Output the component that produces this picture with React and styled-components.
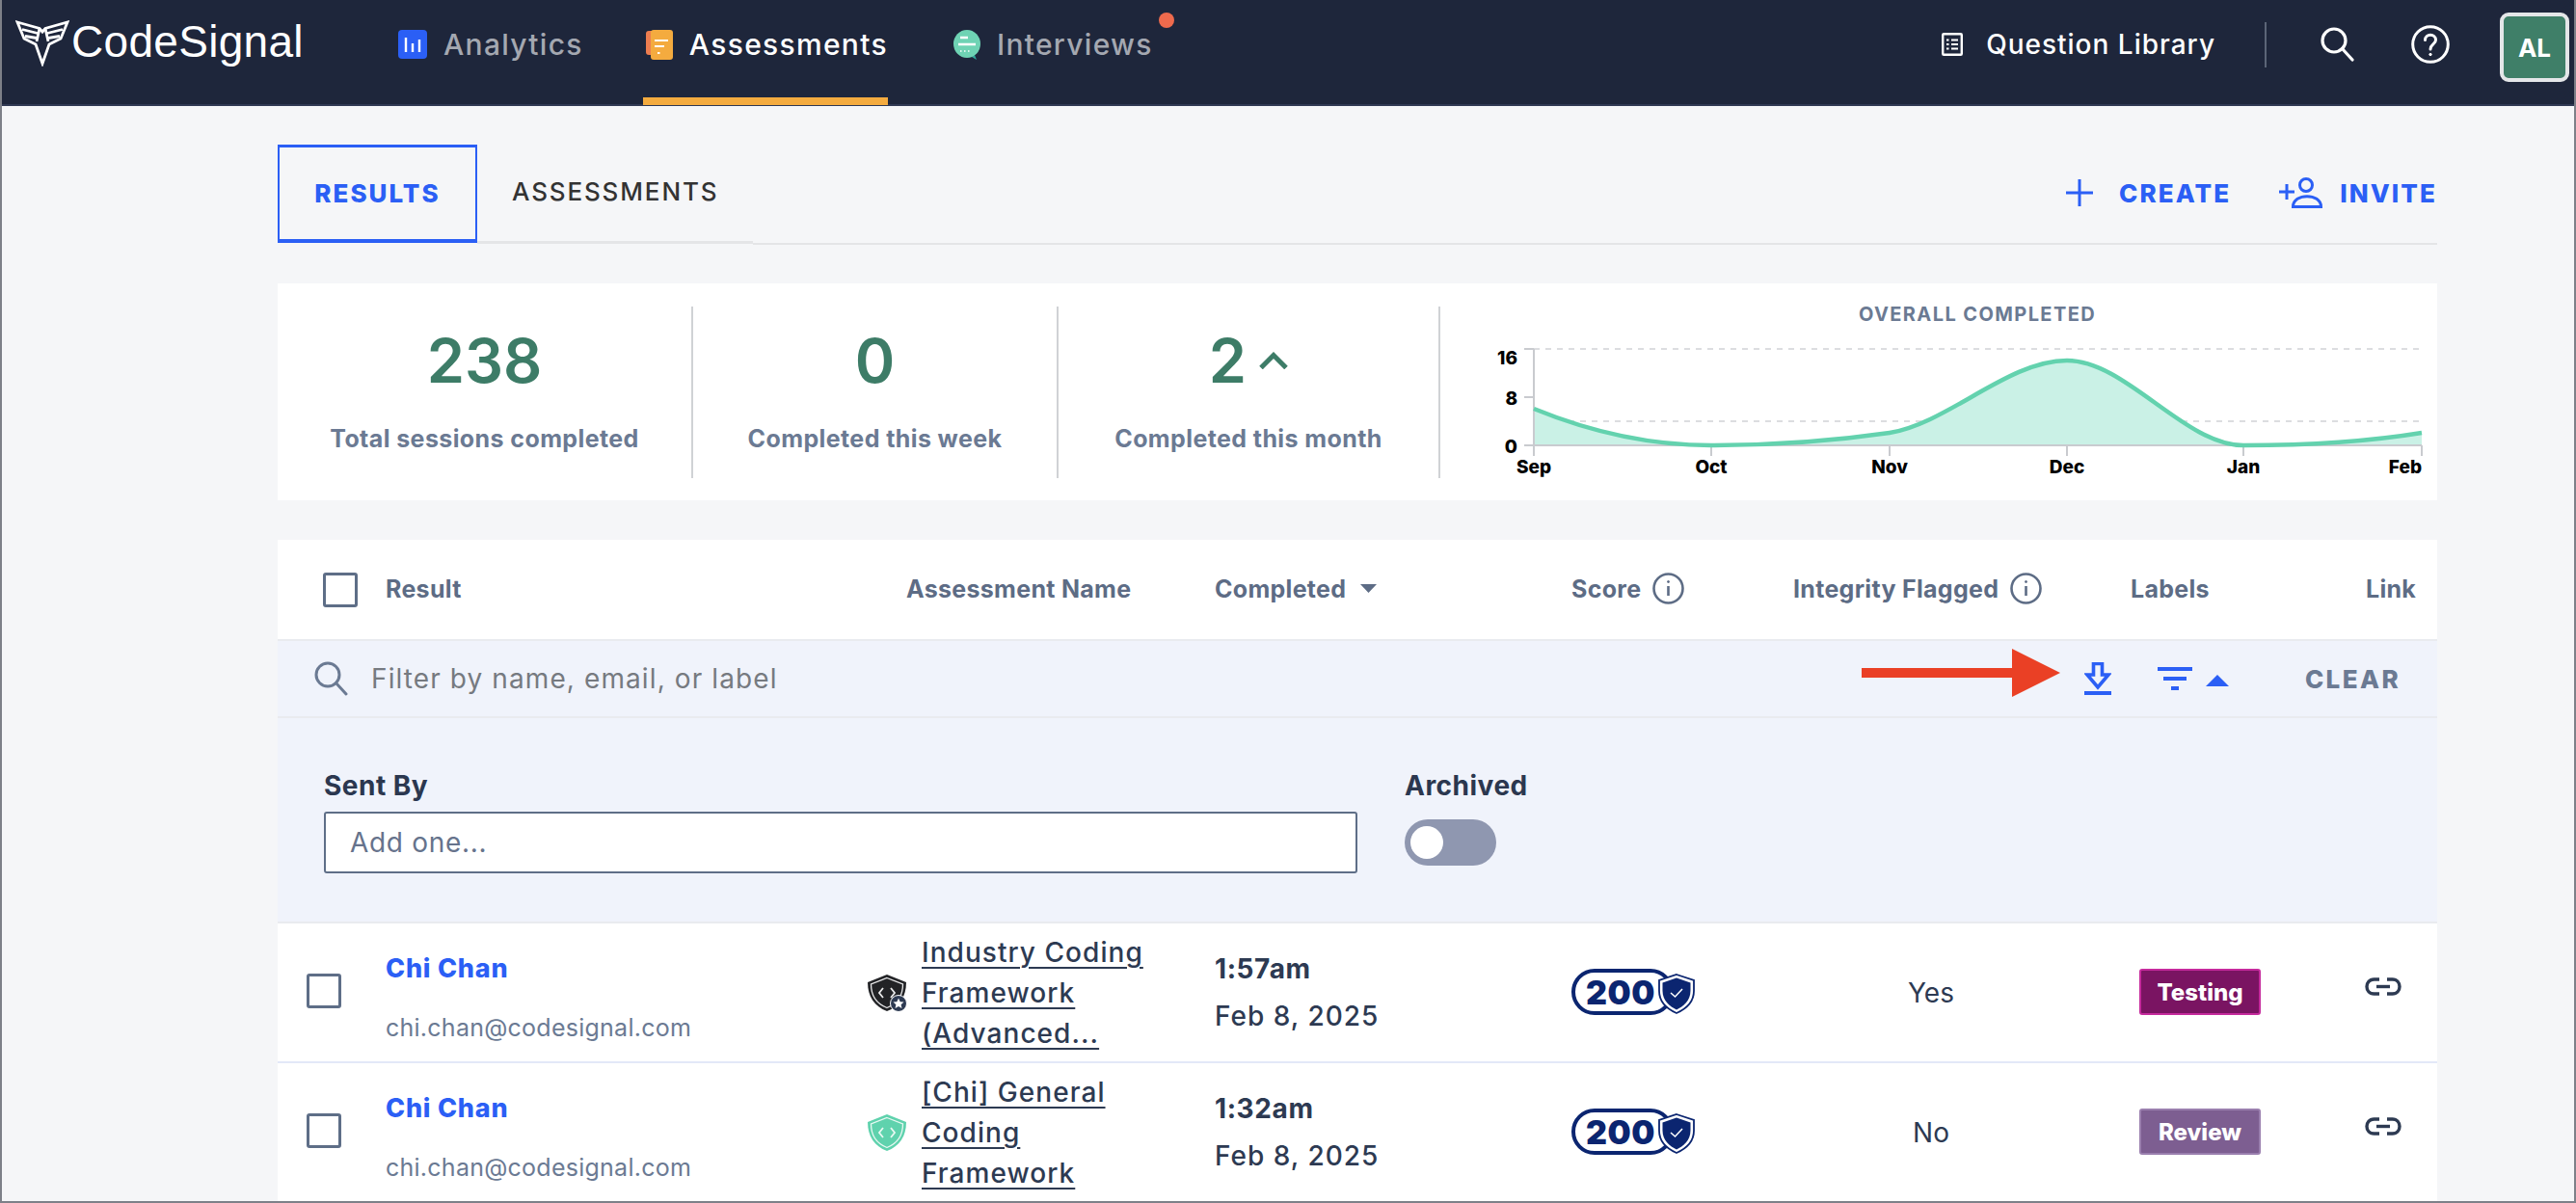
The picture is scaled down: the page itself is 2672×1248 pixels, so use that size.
import styled, { createGlobalStyle } from "styled-components";

const BLUE = "#2b5ff5";
const SLATE = "#6b7a93";
const HEAD = "#5d6c85";
const INK = "#2d3a52";
const NAVY = "#0b2570";

const GlobalStyle = createGlobalStyle`
  * { box-sizing: border-box; }
  html, body { margin: 0; padding: 0; }
  body { font-family: Inter, "Noto Sans", sans-serif; background: #f5f6f8; }
`;

function Logo() {
  return (
    <svg width="56" height="48" viewBox="0 0 56 48" fill="none" stroke="#fff" strokeWidth="2.8">
      <path d="M2 2 L25 8.5 L28 12 L31 8.5 L54 2 L47 19 L35 25 L28 45 L21 25 L9 19 Z" />
      <path d="M25 8.5 L22 22 M31 8.5 L34 22 M7 9.5 L23 13.5 M49 9.5 L33 13.5 M10 16.5 L22 18.5 M46 16.5 L34 18.5" />
    </svg>
  );
}

function AnalyticsIcon() {
  return (
    <svg width="30" height="30" viewBox="0 0 30 30">
      <rect width="30" height="30" rx="4" fill="#2b5ff5" />
      <path d="M8 8v15M15 14v9M22 10v13" stroke="#fff" strokeWidth="2.4" />
    </svg>
  );
}

function AssessmentsIcon() {
  return (
    <svg width="28" height="31" viewBox="0 0 28 31">
      <rect x="0" y="1" width="20" height="25" rx="3" fill="#ed7d4f" />
      <rect x="5" y="0" width="23" height="31" rx="3" fill="#f4ab3f" />
      <path d="M9 11h14M9 17h10M12 24h2.5" stroke="#fff" strokeWidth="2.2" />
    </svg>
  );
}

function InterviewsIcon() {
  return (
    <svg width="28" height="31" viewBox="0 0 28 31">
      <path d="M22 26 L24 31 L19 28 Z" fill="#2fa79a" />
      <ellipse cx="14" cy="14.5" rx="14" ry="14.5" fill="#6fd3b4" />
      <path d="M7 8h8M5 15h18" stroke="#fff" strokeWidth="2.4" />
      <path d="M7 22h1.5M11 22h1.5M15 22h1.5" stroke="#fff" strokeWidth="1.6" />
    </svg>
  );
}

function LibraryIcon() {
  return (
    <svg width="22" height="24" viewBox="0 0 22 24" fill="none" stroke="#fff">
      <rect x="1.2" y="1.2" width="19.6" height="21.6" rx="1" strokeWidth="2.4" />
      <path d="M5 7.5h2.5M10 7.5h7M5 12h2.5M10 12h7M5 16.5h2.5M10 16.5h7" strokeWidth="2.2" />
    </svg>
  );
}

function SearchGlyph({ size, color, stroke }) {
  return (
    <svg width={size} height={size} viewBox="0 0 36 36" fill="none" stroke={color} strokeWidth={stroke}>
      <circle cx="14" cy="14" r="12" />
      <path d="M22.5 22.5 L33 34" strokeLinecap="round" />
    </svg>
  );
}

function HelpIcon() {
  return (
    <svg width="40" height="40" viewBox="0 0 40 40" fill="none" stroke="#fff" strokeWidth="3">
      <circle cx="20" cy="20" r="18.3" />
      <path d="M14.5 15.5 C14.5 8.5 25.5 8.5 25.5 15.5 C25.5 20 20 20 20 25" strokeLinecap="round" />
      <circle cx="20" cy="30.5" r="1.2" fill="#fff" strokeWidth="1" />
    </svg>
  );
}

function PlusIcon() {
  return (
    <svg width="28" height="28" viewBox="0 0 28 28" stroke={BLUE} strokeWidth="3">
      <path d="M14 0v28M0 14h28" />
    </svg>
  );
}

function InviteIcon() {
  return (
    <svg width="45" height="32" viewBox="0 0 45 32" fill="none" stroke={BLUE} strokeWidth="3">
      <path d="M8 7v16M0 15h16" />
      <circle cx="28" cy="8" r="6.5" />
      <path d="M14.5 30.5 C14.5 16 43.5 16 43.5 30.5 Z" />
    </svg>
  );
}

function InfoIcon() {
  return (
    <svg width="33" height="33" viewBox="0 0 33 33" fill="none" stroke={HEAD} strokeWidth="2.6">
      <circle cx="16.5" cy="16.5" r="15" />
      <path d="M16.5 14v10" />
      <circle cx="16.5" cy="9.5" r="1" fill={HEAD} strokeWidth="1" />
    </svg>
  );
}

function Caret({ up, color, width, height }) {
  return (
    <svg width={width} height={height} viewBox="0 0 10 8" preserveAspectRatio="none" fill={color}>
      <path d={up ? "M5 0 L10 8 H0 Z" : "M0 0 H10 L5 8 Z"} />
    </svg>
  );
}

function DownloadIcon() {
  return (
    <svg width="28" height="34" viewBox="0 0 28 34">
      <path d="M9.5 1.5h9v11.5h6.5L14 26 3 13h6.5z" fill="#f0f3fb" stroke={BLUE} strokeWidth="3.6" />
      <rect x="0" y="30" width="28" height="4" fill={BLUE} />
    </svg>
  );
}

function FilterIcon() {
  return (
    <svg width="36" height="24" viewBox="0 0 36 24" fill={BLUE}>
      <rect width="36" height="4" />
      <rect x="6" y="10" width="24" height="4" />
      <rect x="14" y="20" width="8" height="4" />
    </svg>
  );
}

function RedArrow() {
  return (
    <svg width="206" height="50" viewBox="0 0 206 50" fill="#ea4025">
      <path d="M0 20 H156 V0 L206 25 L156 50 V30 H0 Z" />
    </svg>
  );
}

function TrendChevron() {
  return (
    <svg width="30" height="18" viewBox="0 0 30 18" fill="none" stroke="#3d7c67" strokeWidth="5">
      <path d="M2 16.5 L15 3.5 L28 16.5" />
    </svg>
  );
}

function ShieldIcon({ dark }) {
  const fill = dark ? "#222326" : "#5fd2ad";
  const line = dark ? "#e9e9ea" : "#e8f8f2";
  return (
    <svg width="42" height="40" viewBox="0 0 42 40" fill="none">
      <path d="M20 1 L40 9 C40 24 33 34 20 39 C7 34 0 24 0 9 Z" fill={fill} />
      <path d="M20 4.5 L36.5 11 C36.5 24 30 31.5 20 35.5 C10 31.5 3.5 24 3.5 11 Z" stroke={line} strokeWidth="1.3" />
      <path d="M16 15 L12 20 L16 25 M24 15 L28 20 L24 25" stroke={line} strokeWidth="1.8" />
      {dark && (
        <>
          <circle cx="32" cy="31" r="8.5" fill="#2d3a52" stroke="#fff" strokeWidth="1" />
          <path d="M32 25.5 L33.7 29.2 L37.5 29.6 L34.6 32.2 L35.5 36 L32 34 L28.5 36 L29.4 32.2 L26.5 29.6 L30.3 29.2 Z" fill="#fff" />
        </>
      )}
    </svg>
  );
}

function ScoreShield() {
  return (
    <svg width="38" height="42" viewBox="0 0 38 42" fill="none">
      <path d="M19 1 L37 7 V18 C37 30 28 37 19 41 C10 37 1 30 1 18 V7 Z" fill="#fff" stroke={NAVY} strokeWidth="1.8" />
      <path d="M19 4.5 L33.5 9.5 V18 C33.5 28 26 34 19 37.5 C12 34 4.5 28 4.5 18 V9.5 Z" fill={NAVY} />
      <path d="M13 20 L17.5 24 L25 16" stroke="#fff" strokeWidth="1.5" />
    </svg>
  );
}

function LinkIcon() {
  return (
    <svg width="38" height="19" viewBox="0 0 38 19" fill="none" stroke={INK} strokeWidth="3.4">
      <path d="M15 2 H9.5 C-0.5 2 -0.5 17 9.5 17 H15" />
      <path d="M23 2 H28.5 C38.5 2 38.5 17 28.5 17 H23" />
      <path d="M12 9.5 H26" />
    </svg>
  );
}

function CompletedChart() {
  const ticks = [97, 281, 466, 650, 833, 1018];
  const months = ["Sep", "Oct", "Nov", "Dec", "Jan", "Feb"];
  const curve =
    "M97,90 C158,115 220,128 281,128 C343,128 404,124 466,115 C527,105 589,40 650,40 C711,40 772,128 833,128 C895,128 957,125 1018,115";
  return (
    <svg width="1030" height="162" viewBox="0 0 1030 162" fontFamily="Inter, sans-serif" fontSize="19" fontWeight="800">
      <path d="M97 28H1018M97 103H1018" stroke="#dcdde0" strokeWidth="2" strokeDasharray="6 6" />
      <path d={`${curve} L1018,128 L97,128 Z`} fill="#caf1e6" />
      <path d="M97 28V128H1018M87 28H97M87 78H97M87 128H97" fill="none" stroke="#c9cbcf" strokeWidth="2" />
      {ticks.map((x) => (
        <path key={x} d={`M${x} 128V139`} stroke="#c9cbcf" strokeWidth="2" />
      ))}
      <path d={curve} fill="none" stroke="#63d2ae" strokeWidth="4.5" />
      <text x="80" y="44" textAnchor="end">16</text>
      <text x="80" y="86" textAnchor="end">8</text>
      <text x="80" y="136" textAnchor="end">0</text>
      {months.map((m, i) => (
        <text key={m} x={ticks[i]} y="157" textAnchor={i === 5 ? "end" : "middle"}>{m}</text>
      ))}
    </svg>
  );
}

const results = [
  {
    name: "Chi Chan",
    email: "chi.chan@codesignal.com",
    dark: true,
    title: ["Industry Coding", "Framework", "(Advanced..."],
    time: "1:57am",
    flagged: "Yes",
    label: "Testing",
    labelBg: "#7a1462",
    labelBorder: "#c52a9c",
  },
  {
    name: "Chi Chan",
    email: "chi.chan@codesignal.com",
    dark: false,
    title: ["[Chi] General", "Coding", "Framework"],
    time: "1:32am",
    flagged: "No",
    label: "Review",
    labelBg: "#7d5e91",
    labelBorder: "#9a7fae",
  },
];

export default function App() {
  return (
    <Page>
      <GlobalStyle />
      <NavBar>
        <LogoLink>
          <Logo />
          <LogoText>CodeSignal</LogoText>
        </LogoLink>
        <NavItem>
          <AnalyticsIcon />
          <NavText>Analytics</NavText>
        </NavItem>
        <NavItem $active>
          <AssessmentsIcon />
          <NavText $active>Assessments</NavText>
        </NavItem>
        <NavItem>
          <InterviewsIcon />
          <NavText>Interviews</NavText>
          <NavDot />
        </NavItem>
        <NavRight>
          <LibraryIcon />
          <LibraryText>Question Library</LibraryText>
          <NavDivider />
          <NavIcon $left={56} $right={58}>
            <SearchGlyph size={36} color="#fff" stroke={3.2} />
          </NavIcon>
          <NavIcon $left={0} $right={52}>
            <HelpIcon />
          </NavIcon>
          <Avatar>AL</Avatar>
        </NavRight>
      </NavBar>

      <Main>
        <TabBar>
          <ActiveTab>RESULTS</ActiveTab>
          <PlainTab>ASSESSMENTS</PlainTab>
          <TabLine>
            <ActionButton>
              <PlusIcon />
              <ActionText>CREATE</ActionText>
            </ActionButton>
            <ActionButton $invite>
              <InviteIcon />
              <ActionText>INVITE</ActionText>
            </ActionButton>
          </TabLine>
        </TabBar>

        <StatsCard>
          <Stat $width={431}>
            <StatNumber>238</StatNumber>
            <StatLabel>Total sessions completed</StatLabel>
          </Stat>
          <Stat $width={379}>
            <StatNumber>0</StatNumber>
            <StatLabel>Completed this week</StatLabel>
          </Stat>
          <Stat $width={396}>
            <StatNumber>
              2
              <TrendChevron />
            </StatNumber>
            <StatLabel>Completed this month</StatLabel>
          </Stat>
          <ChartPanel>
            <ChartTitle>OVERALL COMPLETED</ChartTitle>
            <CompletedChart />
          </ChartPanel>
        </StatsCard>

        <Table>
          <TableHead>
            <HeadCheckCell>
              <Checkbox />
            </HeadCheckCell>
            <HeadCell>Result</HeadCell>
            <HeadCell $indent={40}>Assessment Name</HeadCell>
            <HeadCell>
              Completed
              <SortCaret>
                <Caret color={HEAD} width={17} height={9} />
              </SortCaret>
            </HeadCell>
            <HeadCell>
              Score
              <InfoIcon />
            </HeadCell>
            <HeadCell>
              Integrity Flagged
              <InfoIcon />
            </HeadCell>
            <HeadCell>Labels</HeadCell>
            <HeadCell $indent={2}>Link</HeadCell>
          </TableHead>

          <FilterBar>
            <SearchGlyph size={36} color={SLATE} stroke={3} />
            <FilterText>Filter by name, email, or label</FilterText>
            <ArrowSlot>
              <RedArrow />
            </ArrowSlot>
            <DownloadSlot>
              <DownloadIcon />
            </DownloadSlot>
            <FilterToggle>
              <FilterIcon />
              <ToggleCaret>
                <Caret up color={BLUE} width={24} height={12} />
              </ToggleCaret>
            </FilterToggle>
            <ClearButton>CLEAR</ClearButton>
          </FilterBar>

          <FilterPanel>
            <FieldColumn>
              <FieldLabel>Sent By</FieldLabel>
              <AddField>Add one...</AddField>
            </FieldColumn>
            <ToggleColumn>
              <FieldLabel>Archived</FieldLabel>
              <Toggle>
                <ToggleKnob />
              </Toggle>
            </ToggleColumn>
          </FilterPanel>

          {results.map((row) => (
            <ResultRow key={row.time}>
              <RowCheckCell>
                <Checkbox />
              </RowCheckCell>
              <PersonCell>
                <PersonName>{row.name}</PersonName>
                <PersonEmail>{row.email}</PersonEmail>
              </PersonCell>
              <NameCell>
                <ShieldIcon dark={row.dark} />
                <NameLink>
                  {row.title.map((line) => (
                    <NameLine key={line}>{line}</NameLine>
                  ))}
                </NameLink>
              </NameCell>
              <TimeCell>
                <TimeText>{row.time}</TimeText>
                <DateText>Feb 8, 2025</DateText>
              </TimeCell>
              <ScoreCell>
                <ScorePill>200</ScorePill>
                <ScoreMark>
                  <ScoreShield />
                </ScoreMark>
              </ScoreCell>
              <FlagCell>{row.flagged}</FlagCell>
              <LabelCell>
                <LabelChip $bg={row.labelBg} $border={row.labelBorder}>
                  {row.label}
                </LabelChip>
              </LabelCell>
              <LinkCell>
                <LinkIcon />
              </LinkCell>
            </ResultRow>
          ))}
        </Table>
      </Main>
    </Page>
  );
}

const Page = styled.div`
  width: 2672px;
  height: 1248px;
  overflow: hidden;
  background: #f5f6f8;
  border-left: 2px solid #7d8088;
  border-right: 2px solid #7d8088;
  border-bottom: 2px solid #7d8088;
`;

const NavBar = styled.header`
  display: flex;
  height: 110px;
  padding-left: 14px;
  background: #1e263b;
  border-bottom: 2px solid #2f3853;
`;

const LogoLink = styled.div`
  display: flex;
  align-items: flex-start;
  gap: 2px;
  padding-top: 21px;
  width: 397px;
`;

const LogoText = styled.span`
  font-family: "Liberation Sans", Arial, sans-serif;
  font-size: 46px;
  line-height: 46px;
  color: #fff;
  letter-spacing: 0.3px;
  margin-top: -1px;
`;

const NavItem = styled.div`
  position: relative;
  display: flex;
  align-items: center;
  gap: 17px;
  height: 109px;
  margin-bottom: -1px;
  padding: 0 0 9px ${(p) => (p.$active ? "3px" : "0")};
  margin-right: ${(p) => (p.$active ? "68px" : "62px")};
  border-bottom: 8px solid ${(p) => (p.$active ? "#f4ab3f" : "transparent")};
`;

const NavText = styled.span`
  font-size: 30px;
  font-weight: 500;
  letter-spacing: 1.3px;
  color: ${(p) => (p.$active ? "#ffffff" : "#a4a8b1")};
`;

const NavDot = styled.span`
  position: absolute;
  top: 13px;
  right: -22px;
  width: 16px;
  height: 16px;
  border-radius: 50%;
  background: #ee6a4d;
`;

const NavRight = styled.div`
  display: flex;
  align-items: center;
  margin-left: auto;
  padding: 0 5px 16px 0;
  height: 108px;
`;

const LibraryText = styled.span`
  margin-left: 24px;
  font-size: 28px;
  font-weight: 500;
  letter-spacing: 1px;
  color: #fff;
`;

const NavDivider = styled.span`
  width: 2px;
  height: 47px;
  margin-left: 51px;
  background: #5b6577;
`;

const NavIcon = styled.span`
  display: flex;
  margin-left: ${(p) => p.$left}px;
  margin-right: ${(p) => p.$right}px;
`;

const Avatar = styled.div`
  display: flex;
  align-items: center;
  justify-content: center;
  width: 72px;
  height: 72px;
  margin-top: 6px;
  background: #3f7f68;
  border: 4px solid #e4e6e8;
  border-radius: 9px;
  color: #fff;
  font-size: 26px;
  font-weight: 700;
`;

const Main = styled.main`
  width: 2240px;
  margin-left: 286px;
  padding-top: 40px;
`;

const TabBar = styled.div`
  display: flex;
  align-items: flex-start;
  height: 104px;
`;

const ActiveTab = styled.div`
  display: flex;
  align-items: center;
  justify-content: center;
  width: 207px;
  height: 102px;
  border: 2px solid ${BLUE};
  border-top-width: 3px;
  border-bottom-width: 4px;
  color: ${BLUE};
  font-size: 26px;
  font-weight: 800;
  letter-spacing: 2px;
`;

const PlainTab = styled.div`
  display: flex;
  align-items: center;
  width: 286px;
  height: 103px;
  padding: 0 0 4px 36px;
  border-bottom: 3px solid #e4e5e7;
  color: #333;
  font-size: 26px;
  font-weight: 500;
  letter-spacing: 1.85px;
`;

const TabLine = styled.div`
  flex: 1;
  display: flex;
  justify-content: flex-end;
  align-items: center;
  height: 104px;
  padding-bottom: 2px;
  border-bottom: 2px solid #e4e5e7;
`;

const ActionButton = styled.div`
  display: flex;
  align-items: center;
  gap: ${(p) => (p.$invite ? "18px" : "27px")};
  margin-left: ${(p) => (p.$invite ? "50px" : "0")};
`;

const ActionText = styled.span`
  color: ${BLUE};
  font-size: 26px;
  font-weight: 800;
  letter-spacing: 2.1px;
`;

const StatsCard = styled.section`
  display: flex;
  align-items: stretch;
  height: 225px;
  margin-top: 40px;
  padding: 24px 0 23px;
  background: #fff;
`;

const Stat = styled.div`
  display: flex;
  flex-direction: column;
  align-items: center;
  width: ${(p) => p.$width}px;
  padding-top: 18px;
  border-right: 2px solid #d0d2d5;
`;

const StatNumber = styled.div`
  display: flex;
  align-items: center;
  gap: 13px;
  font-size: 63px;
  font-weight: 600;
  line-height: 76px;
  color: #3d7c67;
`;

const StatLabel = styled.div`
  margin-top: 28px;
  font-size: 25px;
  font-weight: 700;
  line-height: 30px;
  letter-spacing: 0.4px;
  color: ${SLATE};
`;

const ChartPanel = styled.div`
  flex: 1;
  display: flex;
  flex-direction: column;
`;

const ChartTitle = styled.div`
  padding-left: 80px;
  text-align: center;
  font-size: 20px;
  font-weight: 700;
  line-height: 16px;
  letter-spacing: 1.4px;
  color: ${SLATE};
`;

const Table = styled.section`
  margin-top: 41px;
`;

const rowColumns = "112px 500px 360px 370px 230px 350px 242px 1fr";

const TableHead = styled.div`
  display: grid;
  grid-template-columns: ${rowColumns};
  align-items: center;
  height: 105px;
  background: #fff;
  border-bottom: 2px solid #e9ebef;
`;

const HeadCheckCell = styled.div`
  padding-left: 47px;
`;

const HeadCell = styled.div`
  display: flex;
  align-items: center;
  gap: 12px;
  padding: 0 0 2px ${(p) => p.$indent || 0}px;
  font-size: 25px;
  font-weight: 700;
  letter-spacing: 0.3px;
  color: ${HEAD};
`;

const SortCaret = styled.span`
  display: flex;
  margin-left: 3px;
`;

const Checkbox = styled.span`
  display: block;
  width: 36px;
  height: 36px;
  background: #fff;
  border: 3.5px solid #5e6e87;
  border-radius: 3px;
`;

const FilterBar = styled.div`
  display: flex;
  align-items: center;
  height: 80px;
  padding-left: 38px;
  background: #f0f3fb;
  border-bottom: 2px solid #e9ebef;
`;

const FilterText = styled.span`
  margin-left: 23px;
  font-size: 28px;
  letter-spacing: 1.1px;
  color: #767a80;
`;

const ArrowSlot = styled.span`
  display: flex;
  margin-left: auto;
  margin-top: -13px;
`;

const DownloadSlot = styled.span`
  display: flex;
  margin-left: 25px;
`;

const FilterToggle = styled.span`
  display: flex;
  align-items: center;
  gap: 14px;
  margin-left: 48px;
`;

const ToggleCaret = styled.span`
  display: flex;
  margin-top: 4px;
`;

const ClearButton = styled.span`
  margin-left: 79px;
  margin-right: 38px;
  font-size: 26px;
  font-weight: 800;
  letter-spacing: 2.4px;
  color: ${SLATE};
`;

const FilterPanel = styled.div`
  display: flex;
  height: 213px;
  padding: 53px 0 0 48px;
  background: #f0f3fb;
  border-bottom: 2px solid #e9ebef;
`;

const FieldColumn = styled.div`
  display: flex;
  flex-direction: column;
  width: 1121px;
`;

const ToggleColumn = styled.div`
  display: flex;
  flex-direction: column;
`;

const FieldLabel = styled.label`
  font-size: 28px;
  font-weight: 700;
  line-height: 34px;
  letter-spacing: 0.5px;
  color: #2b374f;
`;

const AddField = styled.div`
  display: flex;
  align-items: center;
  width: 1072px;
  height: 64px;
  margin-top: 10px;
  padding-left: 25px;
  background: #fff;
  border: 2px solid #5e6e87;
  border-radius: 3px;
  font-size: 28px;
  letter-spacing: 0.7px;
  color: #66738c;
`;

const Toggle = styled.div`
  display: flex;
  align-items: center;
  width: 95px;
  height: 48px;
  margin-top: 18px;
  padding-left: 6px;
  background: #8f97b0;
  border-radius: 24px;
`;

const ToggleKnob = styled.span`
  width: 34px;
  height: 34px;
  border-radius: 50%;
  background: #fff;
`;

const ResultRow = styled.div`
  display: grid;
  grid-template-columns: ${rowColumns};
  height: 145px;
  background: #fff;
  border-bottom: 2px solid #e3e8f8;
`;

const RowCheckCell = styled.div`
  display: flex;
  align-items: center;
  padding: 0 0 3px 30px;
`;

const PersonCell = styled.div`
  display: flex;
  flex-direction: column;
  padding-top: 31px;
`;

const PersonName = styled.span`
  font-size: 27px;
  font-weight: 800;
  line-height: 32px;
  letter-spacing: 0.8px;
  color: ${BLUE};
`;

const PersonEmail = styled.span`
  margin-top: 30px;
  font-size: 25px;
  line-height: 30px;
  letter-spacing: 0.25px;
  color: ${SLATE};
`;

const NameCell = styled.div`
  display: flex;
  align-items: center;
  gap: 14px;
`;

const NameLink = styled.div`
  display: flex;
  flex-direction: column;
  align-items: flex-start;
`;

const NameLine = styled.span`
  font-size: 28px;
  font-weight: 500;
  line-height: 42px;
  letter-spacing: 1.05px;
  color: ${INK};
  text-decoration: underline;
  text-underline-offset: 5px;
  text-decoration-thickness: 2px;
`;

const TimeCell = styled.div`
  display: flex;
  flex-direction: column;
  padding-top: 31px;
`;

const TimeText = styled.span`
  font-size: 28px;
  font-weight: 700;
  line-height: 32px;
  letter-spacing: 0.6px;
  color: ${INK};
`;

const DateText = styled.span`
  margin-top: 18px;
  font-size: 28px;
  font-weight: 500;
  line-height: 30px;
  letter-spacing: 1px;
  color: ${INK};
`;

const ScoreCell = styled.div`
  display: flex;
  align-items: flex-start;
  padding-top: 47px;
`;

const ScorePill = styled.span`
  display: flex;
  align-items: center;
  justify-content: center;
  width: 106px;
  height: 48px;
  padding-right: 4px;
  border: 4px solid ${NAVY};
  border-radius: 24px;
  font-size: 34px;
  font-weight: 900;
  letter-spacing: 0.5px;
  color: ${NAVY};
`;

const ScoreMark = styled.span`
  display: flex;
  margin: 5px 0 0 -16px;
`;

const FlagCell = styled.div`
  display: flex;
  align-items: center;
  justify-content: center;
  padding-right: 64px;
  font-size: 28px;
  color: ${INK};
`;

const LabelCell = styled.div`
  padding: 47px 0 0 9px;
`;

const LabelChip = styled.span`
  display: flex;
  align-items: center;
  justify-content: center;
  width: 126px;
  height: 48px;
  background: ${(p) => p.$bg};
  border: 2.5px solid ${(p) => p.$border};
  border-radius: 3px;
  font-size: 24px;
  font-weight: 800;
  color: #fff;
`;

const LinkCell = styled.div`
  padding: 56px 0 0 1px;
`;
